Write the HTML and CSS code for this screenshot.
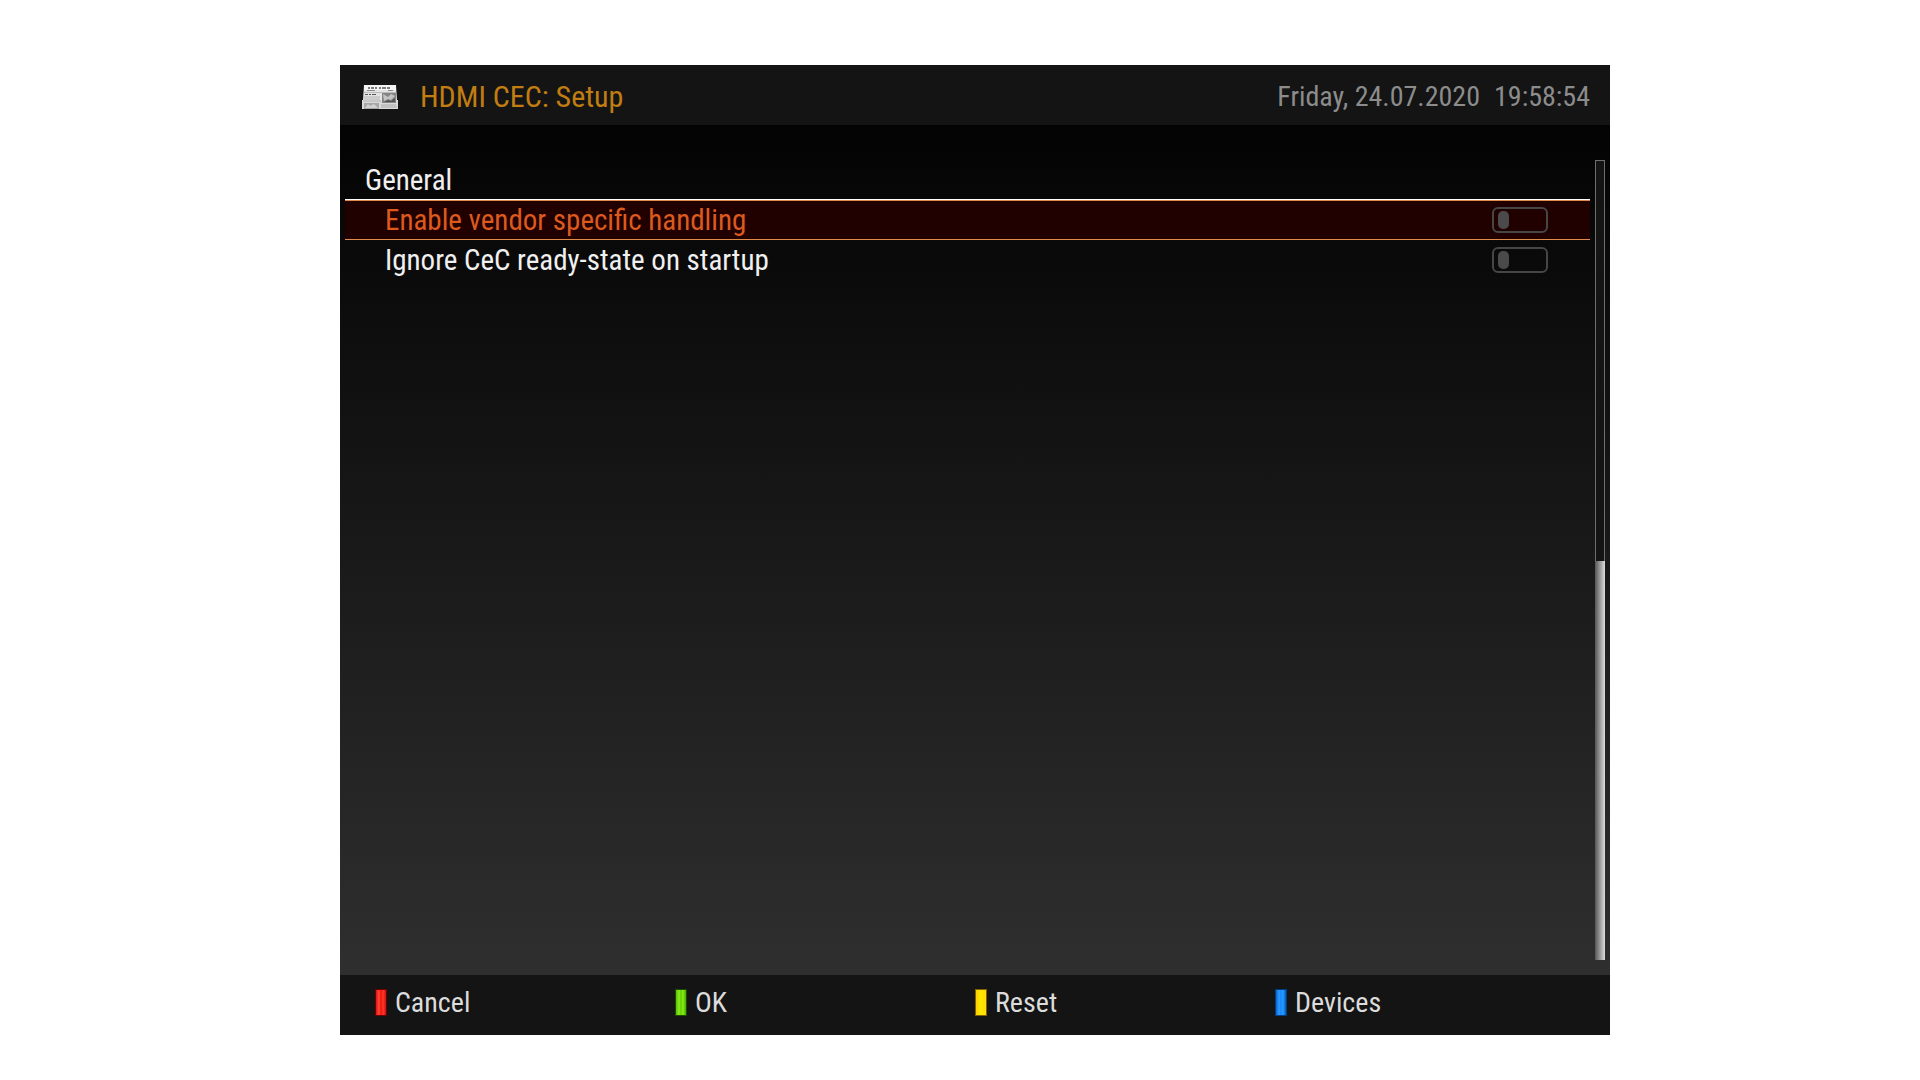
FILE: index.html
```
<!DOCTYPE html>
<html lang="en">
<head>
  <meta charset="UTF-8">
  <title>HDMI CEC: Setup</title>
  <link rel="stylesheet" href="styles.css">
</head>
<body>
  <div class="screen">
    <header class="header">
      <svg class="news-icon" viewBox="0 0 38 26" aria-hidden="true">
        <path d="M3 1h32l1 15H2z" fill="#e4e4e4"/>
        <path d="M1 16h36v9H1z" fill="#dadada"/>
        <path d="M3 1h32v5H3z" fill="#f4f4f4"/>
        <path d="M7 4h2m1 0h3m1 0h2m2 0h2m1 0h4m1 0h3" stroke="#555" stroke-width="1.5"/>
        <path d="M6 6.500h8m13 0h5" stroke="#888"/>
        <path d="M3 8.500h32" stroke="#bbb"/>
        <path d="M4 10.500h3m1 0h2m1 0h4" stroke="#555"/>
        <path d="M3 13h16M3 15h16M2 17h18" stroke="#b4b4b4"/>
        <path d="M21 9h14v10H21z" fill="#858585"/>
        <path d="M22 10l5 3 3-3 4 2-4 4-3-1-4 2z" fill="#c4c4c4"/>
        <path d="M23 18l4-2 3 1 4-3v4z" fill="#555"/>
        <path d="M3 19h15v6H3z" fill="#a8a8a8"/>
        <path d="M4 24l3-4 2 2 4-2 4 4z" fill="#d2d2d2"/>
        <path d="M20 21h15M20 23h16" stroke="#aaa"/>
      </svg>
      <h1 class="title">HDMI CEC: Setup</h1>
      <time class="clock" datetime="2020-07-24T19:58:54">
        <span>Friday, 24.07.2020</span>
        <span>19:58:54</span>
      </time>
    </header>

    <main class="content">
      <div class="settings">
        <h2 class="group">General</h2>
        <label class="option selected">
          <span>Enable vendor specific handling</span>
          <input type="checkbox" class="switch">
        </label>
        <label class="option">
          <span>Ignore CeC ready-state on startup</span>
          <input type="checkbox" class="switch">
        </label>
      </div>
      <div class="scrollbar"><div class="thumb"></div></div>
    </main>

    <footer class="footer">
      <button class="key red">Cancel</button>
      <button class="key green">OK</button>
      <button class="key yellow">Reset</button>
      <button class="key blue">Devices</button>
    </footer>
  </div>
</body>
</html>
```
FILE: styles.css
```
* {
  box-sizing: border-box;
}

body {
  margin: 0;
  min-height: 100vh;
  padding: 65px 310px 45px 340px;
  display: flex;
  background: #fff;
  color: #f0f0f0;
  font-family: "Roboto Condensed", Roboto, sans-serif;
  font-size: 29px;
  line-height: 40px;
}

.screen {
  flex: 1;
  display: flex;
  flex-direction: column;
  background: linear-gradient(#000, #323232);
}

.header {
  display: flex;
  align-items: center;
  padding: 4px 20px 0 21px;
  height: 60px;
  background: #141414;
}

.news-icon {
  width: 38px;
  height: 26px;
  margin-right: 21px;
}

.title,
.group {
  margin: 0;
  font-size: inherit;
  font-weight: 400;
}

.title {
  font-size: 30px;
  color: #c17d11;
}

.clock {
  display: flex;
  gap: 14px;
  margin-left: auto;
  font-size: 28px;
  color: #8c8c8c;
}

.content {
  flex: 1;
  display: flex;
  gap: 5px;
  padding: 35px 5px 15px;
}

.settings {
  flex: 1;
}

.group {
  padding-left: 20px;
}

.option {
  display: flex;
  align-items: center;
  justify-content: space-between;
  height: 40px;
  padding: 0 42px 0 40px;
}

.selected {
  color: #dc5a1e;
  background: #210000;
  border-bottom: 1px solid #e08a4c;
  border-top: 1px solid #e08a4c;
  box-shadow: 0 -1px #fff;
}

.switch {
  appearance: none;
  display: flex;
  width: 56px;
  height: 26px;
  margin: 0;
  padding: 2px 4px;
  border: 2px solid #464646;
  border-radius: 6px;
}

.switch::before {
  content: "";
  width: 11px;
  height: 18px;
  border-radius: 5px;
  background: #4a4a4a;
}

.switch:checked {
  justify-content: flex-end;
}

.scrollbar {
  width: 10px;
  display: flex;
  align-items: flex-end;
  border: 1px solid #6e6e6e;
  border-bottom: 0;
  background: #141414;
}

.thumb {
  flex: 1;
  height: 50%;
  margin: 0 -1px;
  background: linear-gradient(to right, #555, #ddd);
}

.footer {
  display: grid;
  grid-template-columns: repeat(4, 1fr);
  height: 60px;
  padding: 0 35px 5px;
  background: #141414;
}

.key {
  display: flex;
  align-items: center;
  gap: 8px;
  padding: 0;
  border: 0;
  background: none;
  color: #dcdcdc;
  font: inherit;
  font-size: 28px;
}

.key::before {
  content: "";
  width: 10px;
  height: 25px;
  border: 1px solid;
}

.red::before {
  border-color: #6a0000;
  background: linear-gradient(to right, #d11, #ff4a3a 30%, #f01008 50%, #ff3a2a 70%, #c11);
}

.green::before {
  border-color: #1c4a00;
  background: linear-gradient(to right, #5b0, #8e2 30%, #6c0 50%, #8e1 70%, #4a0);
}

.yellow::before {
  border-color: #806000;
  background: linear-gradient(to right, #fc0, #ffe600 40%, #fd0);
}

.blue::before {
  border-color: #003c80;
  background: linear-gradient(to right, #06c, #39f 30%, #18f 50%, #2a9dff 70%, #05b);
}
```
